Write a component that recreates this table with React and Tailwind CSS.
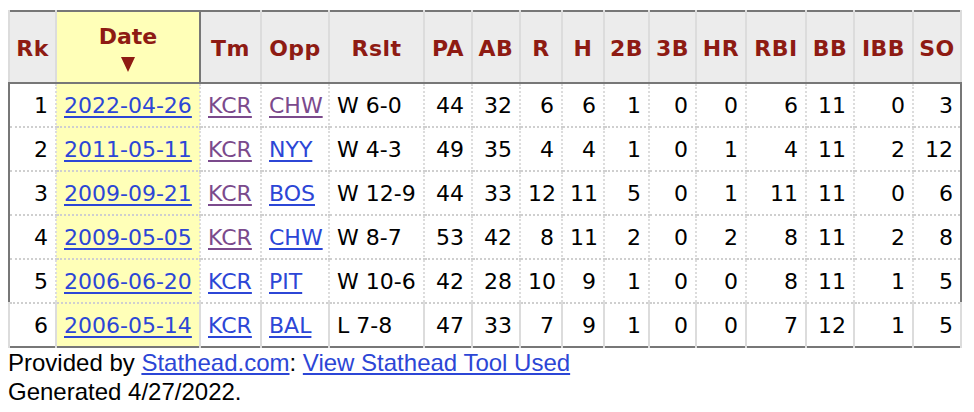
import React from "react";

const cols = [
  { key: "rk", label: "Rk", w: 47, align: "right" },
  { key: "date", label: "Date", w: 144, align: "left" },
  { key: "tm", label: "Tm", w: 61, align: "left" },
  { key: "opp", label: "Opp", w: 68, align: "left" },
  { key: "rslt", label: "Rslt", w: 95, align: "left" },
  { key: "pa", label: "PA", w: 48 },
  { key: "ab", label: "AB", w: 48 },
  { key: "r", label: "R", w: 42 },
  { key: "h", label: "H", w: 42 },
  { key: "b2", label: "2B", w: 45 },
  { key: "b3", label: "3B", w: 47 },
  { key: "hr", label: "HR", w: 50 },
  { key: "rbi", label: "RBI", w: 60 },
  { key: "bb", label: "BB", w: 48 },
  { key: "ibb", label: "IBB", w: 59 },
  { key: "so", label: "SO", w: 48 },
];

const rows = [
  { rk: 1, date: "2022-04-26", tm: "KCR", opp: "CHW", oppSeen: true, rslt: "W 6-0", s: [44, 32, 6, 6, 1, 0, 0, 6, 11, 0, 3] },
  { rk: 2, date: "2011-05-11", tm: "KCR", opp: "NYY", rslt: "W 4-3", s: [49, 35, 4, 4, 1, 0, 1, 4, 11, 2, 12] },
  { rk: 3, date: "2009-09-21", tm: "KCR", opp: "BOS", rslt: "W 12-9", s: [44, 33, 12, 11, 5, 0, 1, 11, 11, 0, 6] },
  { rk: 4, date: "2009-05-05", tm: "KCR", opp: "CHW", rslt: "W 8-7", s: [53, 42, 8, 11, 2, 0, 2, 8, 11, 2, 8] },
  { rk: 5, date: "2006-06-20", tm: "KCR", tmFresh: true, opp: "PIT", rslt: "W 10-6", s: [42, 28, 10, 9, 1, 0, 0, 8, 11, 1, 5] },
  { rk: 6, date: "2006-05-14", tm: "KCR", tmFresh: true, opp: "BAL", rslt: "L 7-8", s: [47, 33, 7, 9, 1, 0, 0, 7, 12, 1, 5] },
];

const blue = "text-[#2c46d6] underline underline-offset-[3px]";
const purple = "text-[#7b4a8c] underline underline-offset-[3px]";

function SortArrow() {
  return (
    <svg width="14" height="15" viewBox="0 0 14 15" className="mx-auto mt-[9px] block">
      <polygon points="0,0 14,0 7,15" fill="#8e1b13" />
    </svg>
  );
}

export default function App() {
  return (
    <div className="bg-white pl-[8px] pt-[10px] font-['DejaVu_Sans',Verdana,sans-serif] text-black">
      <table className="table-fixed border-collapse border-2 border-[#777] text-[22px]" style={{ width: 953 }}>
        <colgroup>
          {cols.map((c) => (
            <col key={c.key} style={{ width: c.w }} />
          ))}
        </colgroup>
        <thead>
          <tr className="h-[72px] bg-[#ececec]">
            {cols.map((c) =>
              c.key === "date" ? (
                <th key={c.key} className="border-2 border-[#777] bg-[#ffffb8] px-[6px] pt-[4px] text-center align-middle font-bold text-[#8e1b13]">
                  <div className="leading-[22px]">Date</div>
                  <SortArrow />
                </th>
              ) : (
                <th key={c.key} className="border-x-2 border-b-2 border-x-[#dcdcdc] border-b-[#777] px-[4px] pt-[2px] text-center align-middle font-bold tracking-[0.5px] text-[#8e1b13]">
                  {c.label}
                </th>
              )
            )}
          </tr>
        </thead>
        <tbody>
          {rows.map((r, i) => {
            const cells = [
              r.rk,
              <a className={blue}>{r.date}</a>,
              <a className={r.tmFresh ? blue : purple}>{r.tm}</a>,
              <a className={r.oppSeen ? purple : blue}>{r.opp}</a>,
              r.rslt,
              ...r.s,
            ];
            return (
              <tr key={r.rk} className="h-[44px]">
                {cells.map((v, j) => (
                  <td
                    key={j}
                    className={`border-x-2 border-x-[#dcdcdc] px-[7px] align-middle whitespace-nowrap ${
                      i < rows.length - 1 ? "border-b-2 border-dotted border-b-[#cfcfcf]" : ""
                    } ${cols[j].align === "left" ? "text-left" : "text-right"} ${j === 1 ? "bg-[#ffffb8]" : ""}`}
                  >
                    {v}
                  </td>
                ))}
              </tr>
            );
          })}
        </tbody>
      </table>
      <div className="font-['Liberation_Sans',Arial,sans-serif] text-[24px] leading-[29px]">
        <div>
          Provided by <a className="text-[#2c46d6] underline underline-offset-[2px]">Stathead.com</a>:{" "}
          <a className="text-[#2c46d6] underline underline-offset-[2px]">View Stathead Tool Used</a>
        </div>
        <div>Generated 4/27/2022.</div>
      </div>
    </div>
  );
}
